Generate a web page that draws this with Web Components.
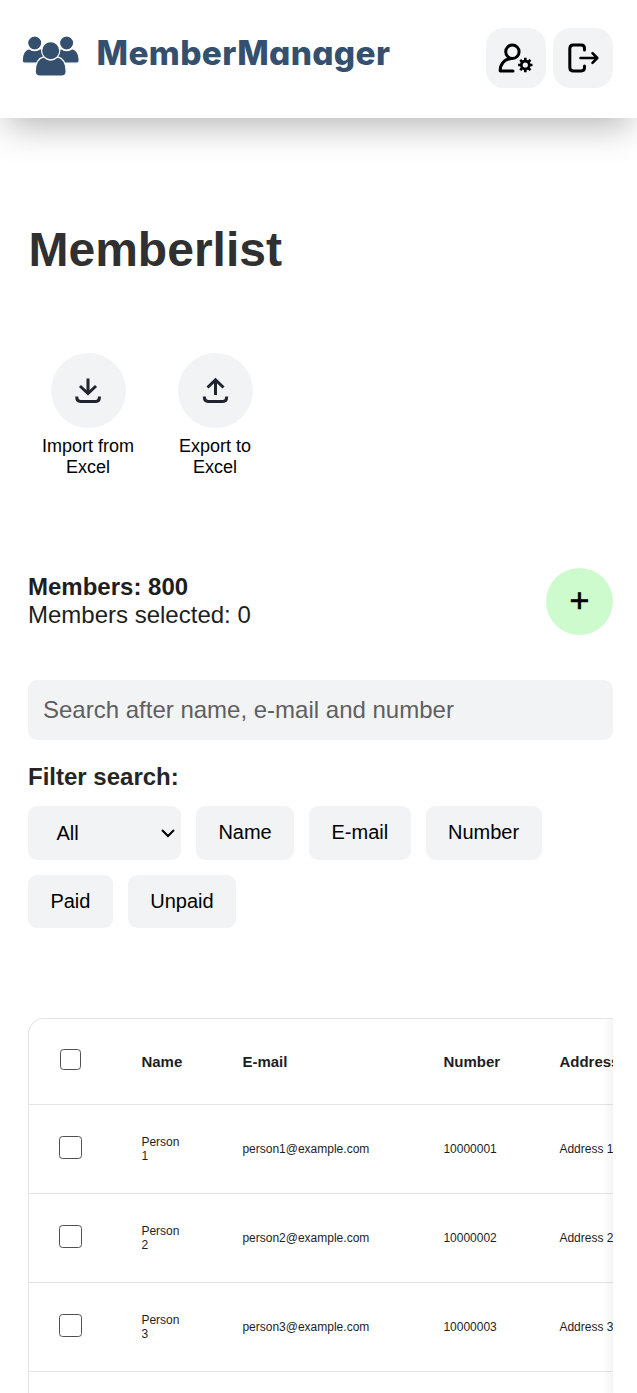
<!DOCTYPE html>
<html lang="en">
<head>
<meta charset="utf-8">
<title>MemberManager</title>
<style>
html,body{margin:0;background:#fff}
body{font-family:"Liberation Sans",Arial,sans-serif;color:#1e1e1e;height:1393px;overflow:hidden}
</style>
</head>
<body>
<member-app></member-app>
<script>
const define = (name, html) => customElements.define(name, class extends HTMLElement {
  constructor() {
    super();
    const t = document.createElement('template');
    t.innerHTML = html;
    this.attachShadow({mode: 'open'}).append(t.content.cloneNode(true));
  }
});

define('brand-logo', `
<style>:host{display:block;width:380px;height:50px}svg{display:block}</style>
<svg width="380" height="50" viewBox="18 30 380 50" fill="#34506e">
  <g stroke="#fff" stroke-width="1.2">
    <path d="M28.8 48.6C24.6 50 22.2 54.5 22.2 60.4Q22.2 63.2 25 63.2H44V51.6L40.6 48.6Q34.7 52.8 28.8 48.6Z"/>
    <path d="M72.6 48.6C76.8 50 79.2 54.5 79.2 60.4Q79.2 63.2 76.4 63.2H57.4V51.6L60.8 48.6Q66.7 52.8 72.6 48.6Z"/>
    <circle cx="34.7" cy="43" r="7.1"/><circle cx="66.6" cy="43" r="7.1"/>
    <path d="M43.6 56.8C37.8 58.4 35.2 64 35.2 71.4Q35.2 76.1 40 76.1H61.4Q66.2 76.1 66.2 71.4C66.2 64 63.6 58.4 57.8 56.8Q50.7 62.8 43.6 56.8Z"/>
    <circle cx="50.7" cy="50.7" r="9.1"/>
  </g>
  <text x="96.6" y="64.7" font-family="Inter, sans-serif" font-weight="800" font-size="33.4" textLength="293.4" lengthAdjust="spacing" style="font-feature-settings:'cv11' 1">MemberManager</text>
</svg>`);

define('icon-button', `
<style>:host{display:flex;width:60px;height:60px;border-radius:18px;background:#f1f3f5;align-items:center;justify-content:center}</style><slot></slot>`);

define('app-header', `
<style>
:host{display:flex;box-sizing:border-box;height:118px;padding:28px 24px 0 18px;justify-content:space-between;align-items:flex-start;background:#fff;box-shadow:rgba(0,0,0,.29) 0 14px 34px -6px;position:relative}
brand-logo{margin-top:2px}
nav{display:flex;gap:7px}
svg{display:block}
</style>
<brand-logo></brand-logo>
<nav>
<icon-button><svg width="60" height="60" fill="none" stroke="#000" stroke-width="3" stroke-linecap="round" stroke-linejoin="round">
  <circle cx="26.4" cy="23.7" r="6.7"/>
  <path d="M27 43H14.2C14 36 18.5 31.2 24.6 30.7"/>
  <circle cx="39.3" cy="37" r="4" stroke-width="2.8"/>
  <path stroke-width="2.6" stroke-linecap="butt" d="M39.3 32.8V29.8M39.3 41.2V44.2M35.1 37H32.1M43.5 37H46.5M36.3 34L34.2 31.9M42.3 34L44.4 31.9M36.3 40L34.2 42.1M42.3 40L44.4 42.1"/>
</svg></icon-button>
<icon-button><svg width="60" height="60" fill="none" stroke="#000" stroke-width="3" stroke-linecap="round" stroke-linejoin="round">
  <path d="M31.5 22V20.4Q31.5 17 28.2 17H20.5Q16.8 17 16.8 20.7V39.3Q16.8 43 20.5 43H28.2Q31.5 43 31.5 39.6V38"/>
  <path stroke-width="2.6" d="M27.5 30H44.3M39.5 25.2L44.3 30L39.5 34.8"/>
</svg></icon-button>
</nav>`);

define('excel-action', `
<style>
:host{display:flex;flex-direction:column;align-items:center;width:120px;font-size:18px;line-height:21px;color:#000;text-align:center}
.c{width:75px;height:75px;border-radius:50%;background:#f1f3f5;margin-bottom:8px}
p{margin:0;width:100px}
</style><div class="c"><slot name="icon"></slot></div><p><slot></slot></p>`);

define('filter-chip', `
<style>:host{display:block;box-sizing:border-box;height:54px;padding:0 22.4px;border-radius:9px;background:#f1f3f5;font-size:20px;line-height:53px;color:#000}</style><slot></slot>`);

define('filter-select', `
<style>:host{display:flex;box-sizing:border-box;width:153px;height:54px;padding:0 6px 0 28.5px;border-radius:9px;background:#f1f3f5;font-size:20px;line-height:54px;color:#000;justify-content:space-between;align-items:center}</style>
<span><slot></slot></span><svg width="14" height="10" fill="none" stroke="#000" stroke-width="2"><path d="M1 2L7 8L13 2"/></svg>`);

define('check-box', `
<style>:host{display:block;box-sizing:border-box;width:23px;height:23px;border:1.3px solid #505050;border-radius:3.5px;background:#fff}</style>`);

define('member-row', `
<style>
:host{display:grid;grid-template-columns:112.4px 101px 201px 116px 200px;box-sizing:border-box;height:89px;border-bottom:1px solid #e3e4e7;align-items:center;font-size:12px;line-height:14px;color:#1e1e1e}
:host([head]){height:86px;font-size:15px;line-height:18px;font-weight:700}
check-box{margin:0 0 3px 30px}
:host([head]) check-box{width:21px;height:21px;margin:0 0 4px 31px}
.n{width:41px}
</style>
<check-box></check-box><div class="n"><slot name="name"></slot></div><div><slot name="email"></slot></div><div><slot name="number"></slot></div><div><slot name="address"></slot></div>`);

define('member-table', `
<style>
:host{display:block;position:relative;height:400px;overflow:hidden;border:1px solid #e3e4e7;border-right:0;border-radius:16px 0 0 0}
.fade{position:absolute;top:0;right:0;bottom:0;width:11px;background:linear-gradient(to right,rgba(0,0,0,0),rgba(0,0,0,.04))}
</style><slot></slot><div class="fade"></div>`);

define('member-app', `
<style>
:host{display:block}
main{padding:0 24px 0 28px}
h1{margin:104px 0 0;padding-left:.5px;font-size:48px;line-height:56px;color:#303030}
.actions{display:flex;gap:7px;margin-top:75px}
.summary{display:flex;justify-content:space-between;align-items:flex-start;margin-top:90px;height:67px}
.count{padding-top:5px;font-size:24px;line-height:28px}
.add{width:67px;height:67px;border-radius:50%;background:#cefbce;color:#000;font-size:34px;line-height:64px;text-align:center;-webkit-text-stroke:.7px #000}
.search{margin-top:45px;height:60px;padding-left:15px;border-radius:9px;background:#f1f3f5;font-size:24px;line-height:60px;color:#5f5f5f}
h2{margin:23px 0 0;font-size:24px;line-height:28px;color:#252525}
.filters{display:flex;flex-wrap:wrap;gap:15px;margin-top:15px}
.filters .low{height:53px}
member-table{margin-top:90px}
svg{display:block}
</style>
<app-header></app-header>
<main>
  <h1>Memberlist</h1>
  <div class="actions">
    <excel-action>Import from Excel<svg slot="icon" width="75" height="75" fill="none" stroke="#20242e" stroke-width="3"><path d="M37 25.5V40M29 33L37 40.5L45 33"/><path d="M25.8 43.5V44.5Q25.8 48.4 29.6 48.4H45Q48.4 48.4 48.4 44.5V43.5"/></svg></excel-action>
    <excel-action>Export to Excel<svg slot="icon" width="75" height="75" fill="none" stroke="#20242e" stroke-width="3"><path d="M37.5 42V27M29.5 34.5L37.5 26.8L45.5 34.5"/><path d="M26.4 43.5V44.5Q26.4 48.4 30.2 48.4H45Q48.6 48.4 48.6 44.5V43.5"/></svg></excel-action>
  </div>
  <div class="summary"><div class="count"><b>Members: 800</b><br>Members selected: 0</div><div class="add">+</div></div>
  <div class="search">Search after name, e-mail and number</div>
  <h2>Filter search:</h2>
  <div class="filters">
    <filter-select>All</filter-select><filter-chip>Name</filter-chip><filter-chip>E-mail</filter-chip><filter-chip>Number</filter-chip>
    <filter-chip class="low">Paid</filter-chip><filter-chip class="low">Unpaid</filter-chip>
  </div>
  <member-table>
    <member-row head><span slot="name">Name</span><span slot="email">E-mail</span><span slot="number">Number</span><span slot="address">Address</span></member-row>
    <member-row><span slot="name">Person 1</span><span slot="email">person1@example.com</span><span slot="number">10000001</span><span slot="address">Address 1</span></member-row>
    <member-row><span slot="name">Person 2</span><span slot="email">person2@example.com</span><span slot="number">10000002</span><span slot="address">Address 2</span></member-row>
    <member-row><span slot="name">Person 3</span><span slot="email">person3@example.com</span><span slot="number">10000003</span><span slot="address">Address 3</span></member-row>
  </member-table>
</main>`);
</script>
</body>
</html>
